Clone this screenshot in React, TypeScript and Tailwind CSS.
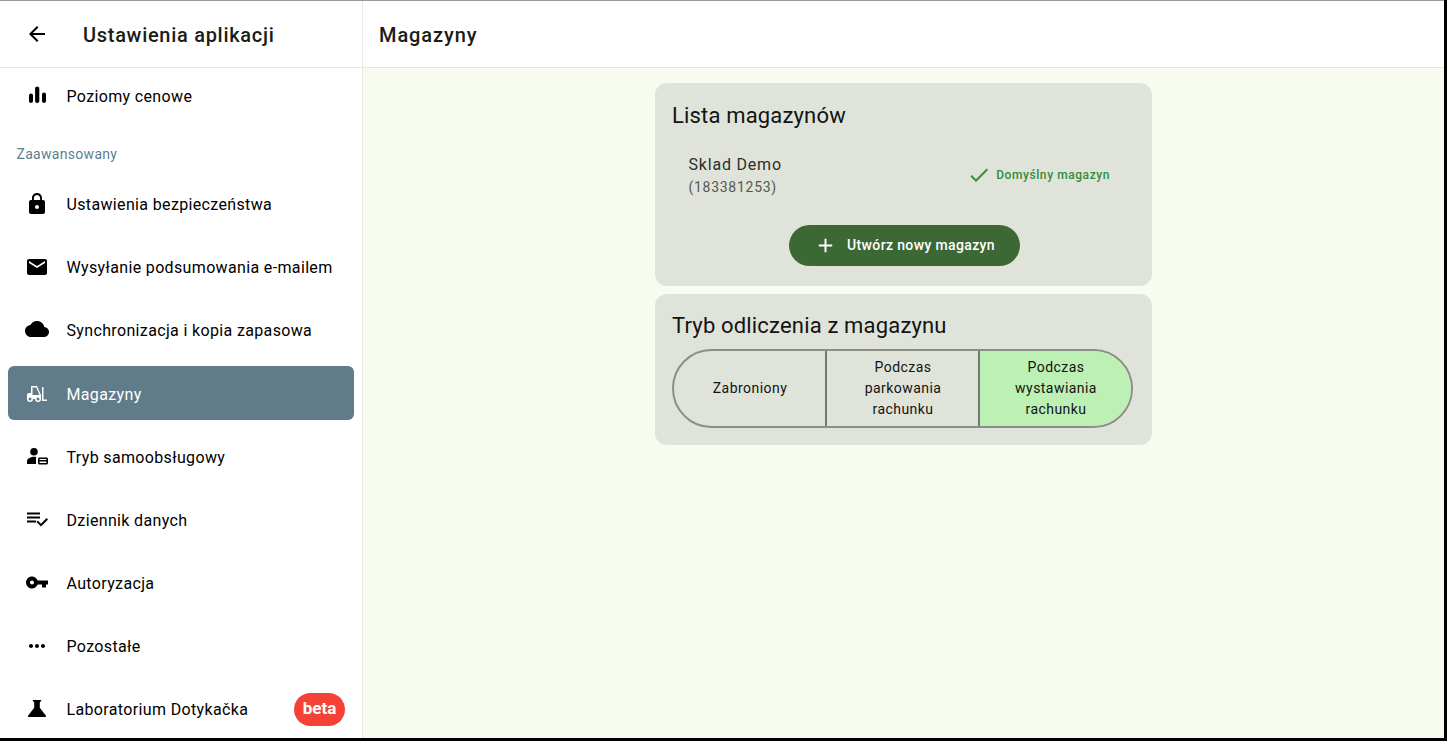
import React from "react";

const P = ({ d, className }: { d: string; className?: string }) => (
  <svg viewBox="0 0 24 24" fill="currentColor" className={className}>
    <path d={d} />
  </svg>
);

const icons = {
  back: "M20 11H7.83l5.59-5.59L12 4l-8 8 8 8 1.41-1.41L7.83 13H20v-2z",
  bars: "M6 9.5c1.1 0 2 .9 2 2V17c0 1.1-.9 2-2 2s-2-.9-2-2v-5.5c0-1.1.9-2 2-2zM12.2 2.5c1.2 0 2.1.9 2.1 2.1V17c0 1.1-.9 2-2.1 2s-2.1-.9-2.1-2V4.600c0-1.200.9-2.100 2.100-2.100zM19 8.500c1.100 0 2 .9 2 2V17c0 1.100-.9 2-2 2s-2-.9-2-2v-6.500c0-1.100.9-2 2-2z",
  lock: "M18 8h-1V6c0-2.76-2.24-5-5-5S7 3.24 7 6v2H6c-1.1 0-2 .9-2 2v10c0 1.1.9 2 2 2h12c1.1 0 2-.9 2-2V10c0-1.1-.9-2-2-2zm-6 9c-1.1 0-2-.9-2-2s.9-2 2-2 2 .9 2 2-.9 2-2 2zm3.1-9H8.9V6c0-1.71 1.39-3.1 3.1-3.1 1.71 0 3.1 1.39 3.1 3.1v2z",
  mail: "M20 4H4c-1.1 0-1.99.9-1.99 2L2 18c0 1.1.9 2 2 2h16c1.1 0 2-.9 2-2V6c0-1.1-.9-2-2-2zm0 4l-8 5-8-5V6l8 5 8-5v2z",
  cloud: "M19.35 9.04C18.67 5.59 15.64 3 12 3 9.11 3 6.6 4.64 5.35 7.04 2.34 7.36 0 9.91 0 13c0 3.31 2.69 6 6 6h13c2.76 0 5-2.24 5-5 0-2.64-2.05-4.78-4.65-4.96z",
  fork: "M6,4V11H4C2.89,11 2,11.89 2,13V17A3,3 0 0,0 5,20A3,3 0 0,0 8,17H10A3,3 0 0,0 13,20A3,3 0 0,0 16,17V13L12,4H6M17,5V19H22V17.5H18.5V5H17M7.5,5.5H11.2L14.5,13H7.5V5.5M5,15.5A1.500,1.500 0 0,1 6.5,17A1.500,1.500 0 0,1 5,18.5A1.500,1.500 0 0,1 3.5,17A1.500,1.500 0 0,1 5,15.5M13,15.5A1.500,1.500 0 0,1 14.5,17A1.500,1.500 0 0,1 13,18.5A1.500,1.500 0 0,1 11.5,17A1.500,1.500 0 0,1 13,15.5Z",
  self: "M9 3a3.800 3.800 0 1 1 0 7.600A3.800 3.800 0 0 1 9 3zM2 19v-2.800c0-2.600 4.300-4.400 7-4.400.7 0 1.500.1 2.300.3-.2.400-.3.900-.3 1.400V19H2zM14.500 12.500h7c.8 0 1.500.7 1.500 1.500v4c0 .8-.7 1.500-1.500 1.500h-7c-.8 0-1.500-.7-1.500-1.500v-4c0-.8.7-1.500 1.500-1.500zm.1 1.500v1h6.800v-1h-6.800zm0 2.400V18h6.800v-1.600h-6.800z",
  log: "M2 4.500h13v2H2v-2zm0 4h13v2H2v-2zm0 4h9v2H2v-2zm19.600-2.400L23 11.500l-7 7-4.500-4.500 1.400-1.400 3.100 3.100 5.600-5.600z",
  key: "M12.650 9.500C11.830 7.170 9.610 5.500 7 5.500c-3.310 0-6 2.690-6 6s2.690 6 6 6c2.610 0 4.830-1.670 5.650-4H17v3h4v-3h2v-4H12.650zM7 13.500c-1.100 0-2-.9-2-2s.9-2 2-2 2 .9 2 2-.9 2-2 2z",
  more: "M6 10c-1.1 0-2 .9-2 2s.9 2 2 2 2-.9 2-2-.9-2-2-2zm12 0c-1.1 0-2 .9-2 2s.9 2 2 2 2-.9 2-2-.9-2-2-2zm-6 0c-1.1 0-2 .9-2 2s.9 2 2 2 2-.9 2-2-.9-2-2-2z",
  flask: "M20.800 18.400L14.800 10.670V5.500l1.350-1.690c.26-.33.03-.81-.39-.81H8.240c-.42 0-.65.48-.39.81L9.200 5.500v5.170L3.200 18.400c-.49.66-.02 1.600.8 1.600h16c.82 0 1.290-.94.8-1.600z",
  check: "M9 16.170L4.830 12l-1.420 1.410L9 19 21 7l-1.410-1.410z",
  add: "M19 13h-6v6h-2v-6H5v-2h6V5h2v6h6v2z",
};

const Row = ({ icon, label, active, beta }: { icon: string; label: string; active?: boolean; beta?: boolean }) => (
  <div
    className={`flex h-[54px] shrink-0 items-center rounded-[6px] mb-[9.125px] pl-[17px] pr-[9px] ${
      active ? "bg-[#607b8a] text-white" : "text-black"
    }`}
  >
    <P d={icon} className="mt-[2px] h-6 w-6 shrink-0" />
    <span className="ml-[17.5px] pt-[4px] text-[16px] tracking-[0.35px]">{label}</span>
    {beta && (
      <span className="ml-auto mt-[2px] flex h-[33px] w-[51px] items-center justify-center rounded-full bg-[#f44336] text-[17px] font-bold text-white">
        beta
      </span>
    )}
  </div>
);

const Seg = ({ lines, active, cls }: { lines: string[]; active?: boolean; cls: string }) => (
  <div
    className={`flex flex-1 flex-col items-center justify-center pl-[1px] text-center text-[14px] leading-[21px] tracking-[0.45px] text-[#111411] ${cls} ${
      active ? "bg-[#bcf0b4]" : ""
    }`}
  >
    {lines.map((l) => (
      <span key={l}>{l}</span>
    ))}
  </div>
);

export default function App() {
  return (
    <div className="flex h-[741px] w-[1447px] flex-col overflow-hidden bg-black font-['Roboto',sans-serif]">
      <div className="h-px shrink-0 bg-[#9a9a9a] mr-[3px]" />
      <div className="mb-[3px] mr-[3px] flex min-h-0 flex-1">
        <aside className="flex w-[363px] shrink-0 flex-col border-r border-[#e8ebe3] bg-white">
          <header className="flex h-[67px] shrink-0 items-center border-b border-[#e4e6df] pl-[25px]">
            <P d={icons.back} className="h-6 w-6 text-black" />
            <h1 className="ml-[34px] pt-[2px] text-[20px] font-medium tracking-[0.7px] text-[#1a1c18]">Ustawienia aplikacji</h1>
          </header>
          <nav className="flex min-h-0 flex-1 flex-col overflow-hidden px-2">
            <Row icon={icons.bars} label="Poziomy cenowe" />
            <div className="flex h-[45px] shrink-0 items-center pt-px pl-[8.5px] text-[14px] tracking-[0.3px] text-[#5b7f90]">
              Zaawansowany
            </div>
            <Row icon={icons.lock} label="Ustawienia bezpieczeństwa" />
            <Row icon={icons.mail} label="Wysyłanie podsumowania e-mailem" />
            <Row icon={icons.cloud} label="Synchronizacja i kopia zapasowa" />
            <Row icon={icons.fork} label="Magazyny" active />
            <Row icon={icons.self} label="Tryb samoobsługowy" />
            <Row icon={icons.log} label="Dziennik danych" />
            <Row icon={icons.key} label="Autoryzacja" />
            <Row icon={icons.more} label="Pozostałe" />
            <Row icon={icons.flask} label="Laboratorium Dotykačka" beta />
          </nav>
        </aside>
        <main className="flex min-w-0 flex-1 flex-col bg-[#f7fbf0]">
          <header className="flex h-[67px] shrink-0 items-center border-b border-[#e4e6df] bg-white pl-[16px]">
            <h2 className="pt-[2px] text-[20px] font-medium tracking-[0.9px] text-[#1a1c18]">Magazyny</h2>
          </header>
          <div className="flex flex-col items-center gap-2 pt-[15px]">
            <section className="flex h-[203px] w-[497px] flex-col rounded-[12px] bg-[#e0e3da] px-[17px] pt-[18px]">
              <h3 className="text-[22px] leading-[30px] tracking-[0.17px] text-[#111411]">Lista magazynów</h3>
              <div className="mt-[13px] flex h-[62px] items-center pl-[16.5px] pr-[25px]">
                <div className="flex flex-col">
                  <span className="text-[16px] leading-[24px] tracking-[0.8px] text-[#2b2e29]">Sklad Demo</span>
                  <span className="text-[14px] leading-[20px] tracking-[0.72px] text-[#55584f]">(183381253)</span>
                </div>
                <div className="ml-auto flex items-center gap-[5px] text-[#2f8f3a]">
                  <P d={icons.check} className="h-[24px] w-[24px]" />
                  <span className="text-[12px] font-medium tracking-[0.58px]">Domyślny magazyn</span>
                </div>
              </div>
              <div className="mt-[19px] flex justify-center pl-[2px]">
                <button className="flex h-[41px] w-[231px] items-center justify-center rounded-full bg-[#3c6835] text-white">
                  <P d={icons.add} className="h-[23px] w-[23px]" />
                  <span className="ml-[10px] text-[14px] font-medium tracking-[0.36px]">Utwórz nowy magazyn</span>
                </button>
              </div>
            </section>
            <section className="flex h-[151px] w-[497px] flex-col rounded-[12px] bg-[#e0e3da] pl-[17px] pr-[19px] pt-[17px]">
              <h3 className="text-[22px] leading-[30px] tracking-[0.17px] text-[#111411]">Tryb odliczenia z magazynu</h3>
              <div className="mt-[8px] flex h-[79px] overflow-hidden rounded-full border-2 border-[#8b9084]">
                <Seg lines={["Zabroniony"]} cls="" />
                <Seg lines={["Podczas", "parkowania", "rachunku"]} cls="border-x-2 border-[#74796d]" />
                <Seg lines={["Podczas", "wystawiania", "rachunku"]} active cls="" />
              </div>
            </section>
          </div>
        </main>
      </div>
    </div>
  );
}
